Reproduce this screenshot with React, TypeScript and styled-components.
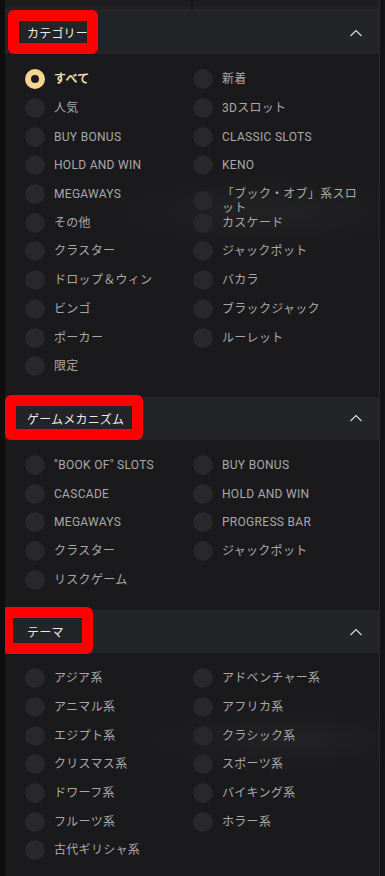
import * as React from 'react'
import styled, { createGlobalStyle, css } from 'styled-components'

const GlobalStyle = createGlobalStyle`
    html, body {
        margin: 0;
        padding: 0;
        background: #131315;
    }
    body {
        font-family: Roboto, "Noto Sans CJK JP", sans-serif;
    }
`

type Item = { label: string; twoLine?: boolean; selected?: boolean }

const categorias: Item[] = [
    { label: 'すべて', selected: true },
    { label: '新着' },
    { label: '人気' },
    { label: '3Dスロット' },
    { label: 'BUY BONUS' },
    { label: 'CLASSIC SLOTS' },
    { label: 'HOLD AND WIN' },
    { label: 'KENO' },
    { label: 'MEGAWAYS' },
    { label: '「ブック・オブ」系スロット', twoLine: true },
    { label: 'その他' },
    { label: 'カスケード' },
    { label: 'クラスター' },
    { label: 'ジャックポット' },
    { label: 'ドロップ＆ウィン' },
    { label: 'バカラ' },
    { label: 'ビンゴ' },
    { label: 'ブラックジャック' },
    { label: 'ポーカー' },
    { label: 'ルーレット' },
    { label: '限定' },
]

const mecanismos: Item[] = [
    { label: '"BOOK OF" SLOTS' },
    { label: 'BUY BONUS' },
    { label: 'CASCADE' },
    { label: 'HOLD AND WIN' },
    { label: 'MEGAWAYS' },
    { label: 'PROGRESS BAR' },
    { label: 'クラスター' },
    { label: 'ジャックポット' },
    { label: 'リスクゲーム' },
]

const temas: Item[] = [
    { label: 'アジア系' },
    { label: 'アドベンチャー系' },
    { label: 'アニマル系' },
    { label: 'アフリカ系' },
    { label: 'エジプト系' },
    { label: 'クラシック系' },
    { label: 'クリスマス系' },
    { label: 'スポーツ系' },
    { label: 'ドワーフ系' },
    { label: 'バイキング系' },
    { label: 'フルーツ系' },
    { label: 'ホラー系' },
    { label: '古代ギリシャ系' },
]

const secciones = [
    { titulo: 'カテゴリー', items: categorias, marca: { left: 3, top: -1, width: 90, height: 44 } },
    { titulo: 'ゲームメカニズム', items: mecanismos, marca: { left: 0, top: -2, width: 138, height: 45 } },
    { titulo: 'テーマ', items: temas, marca: { left: -3, top: -3, width: 91, height: 47 } },
]

const Chevron = () => (
    <svg width="14" height="8" viewBox="0 0 14 8">
        <polyline points="1.5,7 7,1.5 12.5,7" fill="none" stroke="#e0e0e0" strokeWidth="1.1" />
    </svg>
)

export default function App() {
    return (
        <>
            <GlobalStyle />
            <Pagina>
                <Margen />
                <Panel>
                    <BarraSuperior>
                        <CajaSuperior />
                        <CajaSuperior />
                    </BarraSuperior>
                    {secciones.map((s) => (
                        <Seccion key={s.titulo}>
                            <Cabecera>
                                <Titulo>{s.titulo}</Titulo>
                                <Chevron />
                                <Marca
                                    $left={s.marca.left}
                                    $top={s.marca.top}
                                    $width={s.marca.width}
                                    $height={s.marca.height}
                                />
                            </Cabecera>
                            <Rejilla>
                                {s.items.map((it, i) => (
                                    <Opcion key={i} $twoLine={it.twoLine}>
                                        <Radio $selected={it.selected} />
                                        <Etiqueta $selected={it.selected}>{it.label}</Etiqueta>
                                    </Opcion>
                                ))}
                            </Rejilla>
                        </Seccion>
                    ))}
                </Panel>
            </Pagina>
        </>
    )
}

const Pagina = styled.div`
    display: flex;
    min-height: 876px;
    background: #131315;
`

const Margen = styled.div`
    flex: 0 0 5px;
    background: #0e0e0f;
`

const Panel = styled.div`
    flex: 0 0 374px;
    min-height: 876px;
    border-right: 1px solid #2a2a2d;
    background-color: #1a1a1c;
    background-image:
        radial-gradient(ellipse 260px 60px at 70% 24%, rgba(255, 255, 255, 0.035), transparent 70%),
        radial-gradient(ellipse 240px 50px at 75% 84%, rgba(255, 255, 255, 0.035), transparent 70%);
    overflow: hidden;
`

const BarraSuperior = styled.div`
    height: 10px;
    display: grid;
    grid-template-columns: 1fr 1fr;
    gap: 4px;
    border-bottom: 1px solid #2b2b2e;
`

const CajaSuperior = styled.div`
    background: #1d1d20;
    border-bottom: 4px solid #222225;
`

const Seccion = styled.div`
    margin-bottom: 10px;
`

const Cabecera = styled.div`
    position: relative;
    height: 43px;
    display: flex;
    align-items: center;
    justify-content: space-between;
    padding: 0 16px 0 22px;
    background: #232427;
`

const Titulo = styled.span`
    color: #ececec;
    font-size: 12px;
    letter-spacing: 0.2px;
`

const Marca = styled.div`
    position: absolute;
    box-sizing: border-box;
    pointer-events: none;
    border: 11px solid #ff0000;
    border-radius: 6px;
    left: ${({ $left }) => $left}px;
    top: ${({ $top }) => $top}px;
    width: ${({ $width }) => $width}px;
    height: ${({ $height }) => $height}px;
`

const Rejilla = styled.div`
    display: grid;
    grid-template-columns: 168px 168px;
    grid-auto-rows: 28.7px;
    padding: 11px 0 6px 20px;
`

const Opcion = styled.div`
    box-sizing: border-box;
    display: flex;
    align-items: center;
    height: 28.7px;
    ${({ $twoLine }) =>
        $twoLine &&
        css`
            padding-top: 14px;
        `}
`

const Radio = styled.span`
    flex: 0 0 20px;
    height: 20px;
    border-radius: 50%;
    background: #28282b;
    box-sizing: border-box;

    ${({ $selected }) =>
        $selected &&
        css`
            background: #1c1c1e;
            border: 6px solid #f4d591;
        `}
`

const Etiqueta = styled.span`
    margin-left: 9px;
    color: #a9a9a9;
    font-size: 12px;
    line-height: 14px;
    letter-spacing: 0.3px;

    ${({ $selected }) =>
        $selected &&
        css`
            color: #f2dcae;
            font-weight: 700;
        `}
`
